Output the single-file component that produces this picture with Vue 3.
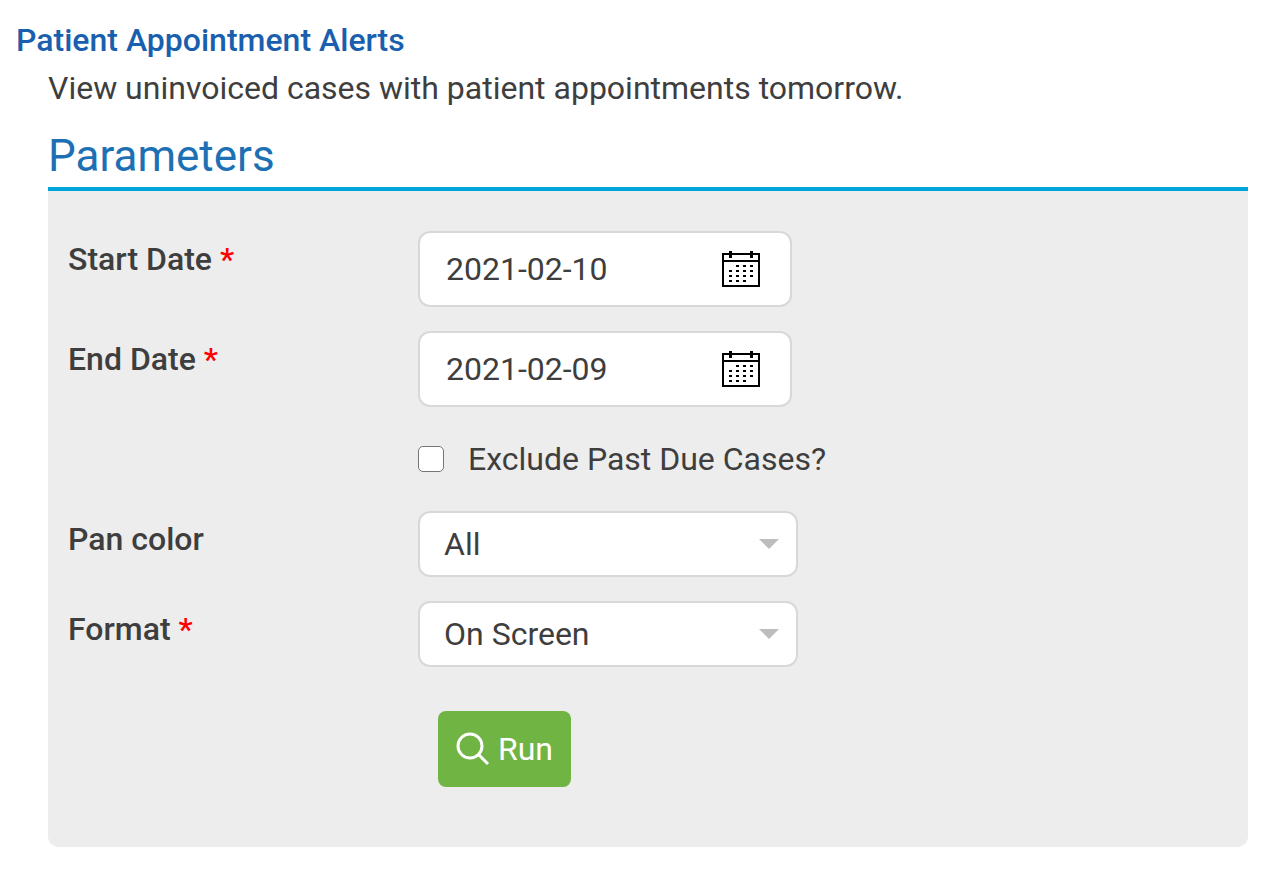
<template>
  <main class="report">
    <h1 class="report-title">Patient Appointment Alerts</h1>

    <div class="report-body">
      <p class="description">View uninvoiced cases with patient appointments tomorrow.</p>

      <h2 class="section-title">Parameters</h2>

      <form class="panel" @submit.prevent="runReport">
        <!-- Date range -->
        <div v-for="field in dateFields" :key="field.id" class="form-row">
          <label :for="field.id">{{ field.label }} <span class="required">*</span></label>
          <div class="date-input">
            <input :id="field.id" v-model="params[field.id]" type="text" required />
            <button type="button" class="calendar-btn" :aria-label="'Pick ' + field.label">
              <svg width="38" height="36" viewBox="0 0 38 36" shape-rendering="crispEdges">
                <path d="M0 2h38v34H0zM2 4v5h34V4zM2 11v23h34V11z" fill-rule="evenodd" />
                <path d="M7 0h3v7H7zM28 0h3v7h-3z" />
                <path
                  d="M14 14h3v2h-3zM21 14h3v2h-3zM28 14h3v2h-3zM7 19h3v2H7zM14 19h3v2h-3zM21 19h3v2h-3zM28 19h3v2h-3zM7 24h3v2H7zM14 24h3v2h-3zM21 24h3v2h-3zM28 24h3v2h-3zM7 29h3v2H7zM14 29h3v2h-3zM21 29h3v2h-3z"
                />
              </svg>
            </button>
          </div>
        </div>

        <div class="form-row">
          <div class="checkbox-field">
            <input id="excludePastDue" v-model="params.excludePastDue" type="checkbox" />
            <label for="excludePastDue">Exclude Past Due Cases?</label>
          </div>
        </div>

        <div class="form-row">
          <label for="panColor">Pan color</label>
          <div class="select-input">
            <select id="panColor" v-model="params.panColor">
              <option>All</option>
            </select>
            <svg class="arrow" width="22" height="12" viewBox="0 0 22 12">
              <path d="M1 1h20L11 11z" />
            </svg>
          </div>
        </div>

        <div class="form-row">
          <label for="format">Format <span class="required">*</span></label>
          <div class="select-input">
            <select id="format" v-model="params.format" required>
              <option>On Screen</option>
            </select>
            <svg class="arrow" width="22" height="12" viewBox="0 0 22 12">
              <path d="M1 1h20L11 11z" />
            </svg>
          </div>
        </div>

        <div class="form-row actions">
          <button type="submit" class="btn-run">
            <svg width="34" height="34" viewBox="0 0 34 34">
              <circle cx="14" cy="14" r="12" />
              <path d="M22.5 22.5L32 32" />
            </svg>
            <span>Run</span>
          </button>
        </div>
      </form>
    </div>
  </main>
</template>

<script setup>
import { reactive } from 'vue';

const dateFields = [
  { id: 'startDate', label: 'Start Date' },
  { id: 'endDate', label: 'End Date' },
];

const params = reactive({
  startDate: '2021-02-10',
  endDate: '2021-02-09',
  excludePastDue: false,
  panColor: 'All',
  format: 'On Screen',
});

const emit = defineEmits(['run']);

const runReport = () => {
  emit('run', { ...params });
};
</script>

<style>
body {
  margin: 0;
  background: #fff;
}
</style>

<style scoped>
.report {
  padding: 16px 25px 40px 16px;
  font-family: Roboto, sans-serif;
  font-size: 32px;
  line-height: 48px;
  color: #3e3e3e;
}

.report * {
  box-sizing: border-box;
}

.report-title {
  margin: 0;
  font-size: 32px;
  font-weight: 500;
  color: #1a5fae;
}

.report-body {
  margin-left: 32px;
}

.description {
  margin: 0;
}

.section-title {
  margin: 16px 0 0;
  padding-bottom: 2px;
  border-bottom: 4px solid #00a5db;
  font-size: 44px;
  font-weight: 400;
  line-height: 57px;
  color: #1c70b3;
}

.panel {
  display: flex;
  flex-direction: column;
  gap: 24px;
  padding: 40px 20px 60px;
  background: #ededed;
  border-radius: 0 0 10px 10px;
}

.form-row {
  display: grid;
  grid-template-columns: 350px minmax(0, 1fr);
  align-items: start;
  line-height: 56px;
}

.form-row > label {
  font-weight: 500;
}

.required {
  color: #f00;
}

.date-input,
.select-input {
  display: flex;
  align-items: center;
  background: #fff;
  border: 2px solid #d8d8d8;
  border-radius: 12px;
}

.date-input {
  width: 100%;
  max-width: 374px;
  height: 76px;
  padding: 0 30px 0 26px;
}

.date-input input {
  flex: 1;
  min-width: 0;
  padding: 0;
  border: none;
  outline: none;
  background: transparent;
  font: inherit;
  color: inherit;
}

.calendar-btn {
  display: flex;
  padding: 0;
  border: none;
  background: none;
  cursor: pointer;
}

.select-input {
  position: relative;
  width: 100%;
  max-width: 380px;
  height: 66px;
}

.select-input select {
  width: 100%;
  height: 100%;
  padding: 0 48px 0 24px;
  border: none;
  border-radius: 12px;
  outline: none;
  appearance: none;
  background: transparent;
  font: inherit;
  color: inherit;
}

.arrow {
  position: absolute;
  right: 16px;
  fill: #bdbdbd;
  pointer-events: none;
}

.checkbox-field {
  grid-column: 2;
  display: flex;
  align-items: center;
  gap: 24px;
}

.checkbox-field input {
  flex: none;
  appearance: none;
  width: 26px;
  height: 26px;
  margin: 0;
  border: 1px solid #767676;
  border-radius: 5px;
  background: #fff;
}

.checkbox-field input:checked {
  background: #1c70b3;
}

.actions {
  padding-top: 20px;
}

.btn-run {
  grid-column: 2;
  justify-self: start;
  display: flex;
  align-items: center;
  gap: 8px;
  height: 76px;
  margin-left: 20px;
  padding: 0 18px;
  border: none;
  border-radius: 8px;
  background: #70b444;
  font: inherit;
  color: #fff;
  cursor: pointer;
}

.btn-run svg {
  fill: none;
  stroke: #fff;
  stroke-width: 3;
}
</style>
